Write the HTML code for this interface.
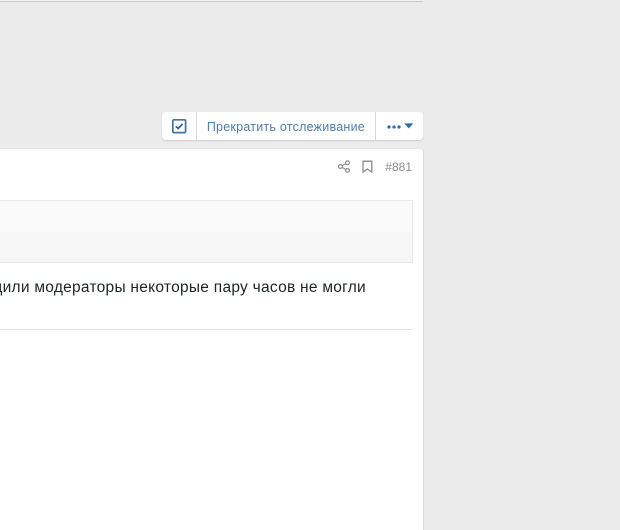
<!DOCTYPE html>
<html>
<head>
<meta charset="utf-8">
<style>
html,body{margin:0;padding:0;width:620px;height:530px;overflow:hidden;background:#ebebeb;font-family:"Liberation Sans",sans-serif}
div,svg,span{position:absolute;box-sizing:border-box}
.t{white-space:nowrap}
</style>
</head>
<body>
<div style="left:0;top:0;width:423px;height:2px;background:#f2f2f2;border-bottom:1px solid #c8c8c8"></div>

<div style="left:162px;top:112px;width:261px;height:28px;background:#fff;border-radius:4px;box-shadow:0 1px 1px #cfcfcf"></div>
<div style="left:196px;top:112px;width:1px;height:28px;background:#d8d8d8"></div>
<div style="left:375px;top:112px;width:1px;height:28px;background:#d8d8d8"></div>
<svg style="left:171px;top:118px" width="16" height="16" viewBox="0 0 16 16">
<rect x="1.8" y="1.8" width="12.8" height="12.8" rx="1.2" fill="none" stroke="#3f74a3" stroke-width="1.7"/>
<path d="M4.8 8.2L7.2 10.5L11.6 6" fill="none" stroke="#2c5f8e" stroke-width="1.7"/>
</svg>
<div class="t" style="right:255px;top:119px;font-size:12.5px;line-height:16px;color:#4f7ea6;letter-spacing:.24px">Прекратить отслеживание</div>
<svg style="left:385px;top:120px" width="30" height="14" viewBox="0 0 30 14">
<circle cx="4" cy="7" r="1.6" fill="#2c6a9f"/>
<circle cx="9" cy="7" r="1.6" fill="#2c6a9f"/>
<circle cx="14" cy="7" r="1.6" fill="#2c6a9f"/>
<path d="M19.3 3.4H28.3L23.8 8.4Z" fill="#2c6a9f"/>
</svg>

<div style="left:0;top:148px;width:424px;height:382px;background:#fff;border-right:1px solid #dcdcdc;border-top:1px solid #e8e8e8;border-top-right-radius:4px"></div>

<svg style="left:337px;top:159px" width="14" height="15" viewBox="0 0 14 15">
<g fill="none" stroke="#8c8c8c" stroke-width="1.2">
<circle cx="3.4" cy="7.5" r="1.9"/><circle cx="10.5" cy="3.8" r="1.9"/><circle cx="10.5" cy="11.4" r="1.9"/>
<path d="M5.1 6.6L8.8 4.7M5.1 8.4L8.8 10.5"/>
</g>
</svg>
<svg style="left:361px;top:159px" width="13" height="15" viewBox="0 0 13 15">
<path d="M2 2.2H10.8V13L6.4 10L2 13Z" fill="none" stroke="#8c8c8c" stroke-width="1.3"/>
</svg>
<div class="t" style="right:208px;top:159px;font-size:12px;line-height:16px;color:#8c8c8c">#881</div>

<div style="left:-2px;top:200px;width:415px;height:63px;border:1px solid #e9e9e9;background:linear-gradient(#fafafa 0,#fafafa 31px,#f6f6f6 31px,#f6f6f6 100%)"></div>

<div class="t" style="right:254px;top:278px;font-size:15.5px;line-height:20px;color:#1f2328;letter-spacing:.27px">ходили модераторы некоторые пару часов не могли</div>

<div style="left:0;top:329px;width:413px;height:1px;background:#e2e2e2"></div>
</body>
</html>
